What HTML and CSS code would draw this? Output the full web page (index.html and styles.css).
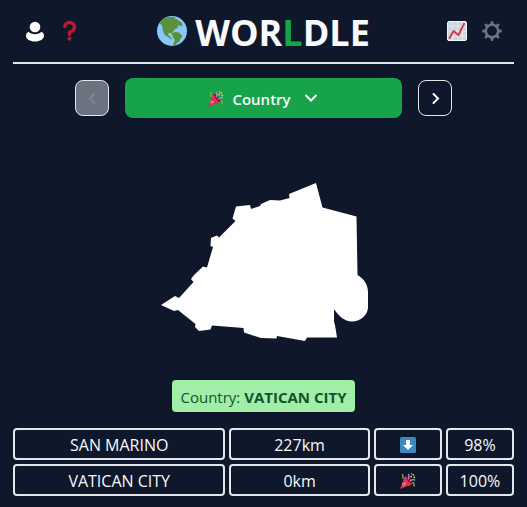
FILE: index.html
```html
<!DOCTYPE html>
<html lang="en">
<head>
<meta charset="utf-8">
<meta name="viewport" content="width=device-width, initial-scale=1">
<title>Worldle</title>
<link rel="stylesheet" href="styles.css">
</head>
<body>
<svg class="sprites" aria-hidden="true">
  <symbol id="popper" viewBox="0 0 36 36">
    <path fill="#dd2e44" d="M11.6 7.3 0.6 34.1c-.3.8.5 1.5 1.3 1.3l27-11C26 18 19 10 11.6 7.3z"/>
    <path fill="#ea596e" d="M11.6 7.3 8 16l12 12 6-2.500C22 19 17 12 11.600 7.300z"/>
    <path fill="#a0041e" d="M14 12c2 7 7 12 12 12l3 .500C27 15 18 7 12 7c-.500 1.500 1 3 2 5z"/>
    <path fill="#dd2e44" d="M11 9c1 8 9 16 16 16l-8 4L7 18z"/>
    <path fill="none" stroke="#aa8dd8" stroke-width="3" d="M18 14c4-4 2-8 1-12M22 19c3-4 7-5 12-3"/>
    <path fill="none" stroke="#77b255" stroke-width="3" d="M4 3c6 1-1 7 4 10M28 22c7-1 0 5 5 8"/>
    <path fill="none" stroke="#aa8dd8" stroke-width="2.500" d="m5 22 5 8"/>
    <g fill="#ffcc4d"><circle cx="25" cy="8" r="2"/><circle cx="30" cy="4" r="2"/><circle cx="32" cy="10" r="2"/><circle cx="11" cy="24" r="2"/><circle cx="26" cy="2" r="1.500"/></g>
  </symbol>
</svg>
<div class="app">
  <header class="header">
    <div class="tools">
      <button class="icon-button" aria-label="Profile">
        <svg width="20" height="22" viewBox="0 0 20 22" fill="#fff"><circle cx="10" cy="7" r="5.300"/><path d="M3.500 11.800C5 13.300 7.300 14.300 10 14.300s5-1 6.500-2.500c1.500.700 2.500 2.200 2.500 3.900C19 19 15 21.500 10 21.500s-9-2.500-9-5.800c0-1.700 1-3.200 2.500-3.900z"/></svg>
      </button>
      <button class="icon-button" aria-label="Help">
        <svg width="20" height="20" viewBox="0 0 36 36"><path fill="#be1931" d="M17 27c-1.700 0-3-1.300-3-3v-4c0-1.700 1.300-3 3-3 3 0 6-2.600 6-6 0-3-2.400-5-6-5-3 0-5 1.500-5.300 4-.2 1.600-1.500 3-3.200 3S5.500 11.500 5.700 10C6.200 4 11 0 17 0c7 0 12 4.600 12 11 0 5.700-4 10.500-9 11.600V24c0 1.700-1.300 3-3 3z"/><circle cx="17" cy="32" r="3.500" fill="#be1931"/></svg>
      </button>
    </div>
    <h1 class="title">
      <svg width="30" height="30" viewBox="0 0 36 36" aria-hidden="true"><circle cx="18" cy="18" r="18" fill="#88c9f9"/><path fill="#5c913b" d="M4.500 6.500C7 3.500 10 1.500 13 .8l3 .6 3-.6 3 1-1 1.700 3 0 2.500 2.500 3 1.500 1 3-1.500 2-2.500-1.500-2 1 1 2.500-3 .6-3 2.900-.5 2 2 2-.5 1.500-2.500-1-.5-2-2.500-.5-2 2 1 1.500 1.500.5 1 2.500 2 .8-1.500.8-3.500-2.800-3.500-1.700-2.500-4-1-5.500L5.500 10.500 3 9z"/><path fill="#5c913b" d="M18.500 21.500l3-2.500 4.500.8 3 2.500 1.500 2.200-2.700 3.500-.8 2.500-3 2-2.200 2.700-2.500.6.500-3 1.500-4-2.300-3.500z"/></svg>
      <span class="wordmark">WOR<span class="accent">L</span>DLE</span>
    </h1>
    <div class="tools">
      <button class="icon-button" aria-label="Statistics">
        <svg width="20" height="20" viewBox="0 0 20 20"><rect x=".5" y=".5" width="19" height="19" rx="1.500" fill="#ccd6dd" stroke="#f5f8fa"/><path fill="none" stroke="#e1e8ed" stroke-width=".8" d="M1 5.500h18M1 10.500h18M1 15.500h18M5.500 1v18M10.500 1v18M15.500 1v18"/><path fill="none" stroke="#dd2e44" stroke-width="1.800" stroke-linejoin="round" stroke-linecap="round" d="m2.500 17 4-7 5 4L17 2.800"/></svg>
      </button>
      <button class="icon-button" aria-label="Settings">
        <svg width="20" height="20" viewBox="0 0 20 20" fill="none" stroke="#66757f"><circle cx="10" cy="10" r="6.200" stroke-width="2.600"/><path stroke-width="3" stroke-linecap="round" d="M10 1.500V3M10 17v1.500M1.500 10H3M17 10h1.500M4 4l1 1M15 15l1 1M16 4l-1 1M5 15l-1 1"/></svg>
      </button>
    </div>
  </header>

  <main>
    <nav class="rounds" aria-label="Rounds">
      <button class="step" aria-label="Previous round" disabled>
        <svg width="16" height="16" viewBox="0 0 16 16"><path d="M10 4 6 8.500l4 4.500"/></svg>
      </button>
      <button class="round" aria-haspopup="menu">
        <svg class="emoji" width="16" height="16" aria-hidden="true"><use href="#popper"/></svg>
        <span>Country</span>
        <svg class="chevron" width="16" height="16" viewBox="0 0 16 16" aria-hidden="true"><path d="m3 4.500 5 5 5-5"/></svg>
      </button>
      <button class="step" aria-label="Next round">
        <svg width="16" height="16" viewBox="0 0 16 16"><path d="m6.500 4 4.500 4.500L6.500 13"/></svg>
      </button>
    </nav>

    <figure class="shape">
      <svg width="210" height="160" viewBox="159 182 210 160" role="img" aria-label="Country outline"><path fill="#fff" d="M161 305 175 296 179 298 193.500 282 191 279 194 275 203 266.500 207 267.500 213 247 210.500 246 211 238 217 235.500 219 237.500 235.500 221 232.500 218.500 236 206.500 250 205 251 209 260 206 261 204 270 200 280 200.500 289.500 198 289 194 316 183 322.500 207.500 356.500 216.500 357.500 275C364 278.500 368 285 368 292v16c-1 8-8 13.500-16 13.500-8-.5-13-5-18-12.500v13l1 3 2 12.500h-30l-2 3.500-28-5-.5 2.500-15.500-.5-17-5.500-.5-4.500-31.500-2.500-1.500 4-11.500 1.500-4-4 .5-3-17.500-14-4 1z"/></svg>
    </figure>

    <p class="answer">Country: <strong>VATICAN CITY</strong></p>

    <table class="guesses" aria-label="Guesses">
      <tbody>
        <tr><td>SAN MARINO</td><td>227km</td><td>
          <svg width="16" height="16" viewBox="0 0 16 16" role="img" aria-label="South"><rect width="16" height="16" rx="1.500" fill="#3b88c3"/><path fill="#fff" d="M6 3h4v5h3l-5 5-5-5h3z"/></svg>
        </td><td>98%</td></tr>
        <tr><td>VATICAN CITY</td><td>0km</td><td>
          <svg width="16" height="16" role="img" aria-label="Correct"><use href="#popper"/></svg>
        </td><td>100%</td></tr>
      </tbody>
    </table>
  </main>
</div>
</body>
</html>
```
FILE: styles.css
```css
* {
  box-sizing: border-box;
}

body {
  margin: 0;
  background: #0f172a;
  color: #f8fafc;
  font: 16px/24px "Open Sans", "Noto Sans", sans-serif;
}

button {
  display: flex;
  align-items: center;
  justify-content: center;
  padding: 0;
  border: 0;
  background: none;
  color: inherit;
  font: inherit;
}

.sprites {
  display: none;
}

.app {
  max-width: 640px;
  margin: 0 auto;
  padding: 0 13px;
}

.header {
  display: flex;
  align-items: center;
  justify-content: space-between;
  height: 64px;
  padding: 0 12px;
  border-bottom: 2px solid #e5e7eb;
}

.tools {
  display: flex;
  gap: 15px;
}

.icon-button {
  width: 20px;
  height: 24px;
}

.title {
  display: flex;
  align-items: center;
  gap: 8px;
  margin: 0;
  font-size: 36px;
  line-height: 40px;
  font-weight: 700;
}

.wordmark {
  padding-top: 4px;
}

.accent {
  color: #16a34a;
}

.rounds {
  display: flex;
  align-items: center;
  justify-content: center;
  gap: 16px;
  padding-top: 14px;
}

.step {
  width: 34px;
  height: 36px;
  border: 1px solid #e5e7eb;
  border-radius: 8px;
}

.step path,
.chevron path {
  fill: none;
  stroke: #fff;
  stroke-width: 2;
  stroke-linecap: round;
}

.step:disabled {
  background: #6b7280;
}

.step:disabled path {
  stroke: #84848a;
}

.round {
  flex: 0 1 277px;
  gap: 8px;
  height: 40px;
  padding-top: 2px;
  border-radius: 8px;
  background: #16a34a;
  font-size: 15px;
  font-weight: 600;
}

.chevron {
  margin-left: 4px;
}

.shape {
  display: flex;
  justify-content: center;
  margin: 0;
  padding: 64px 0 38px;
}

.answer {
  width: fit-content;
  margin: 0 auto 16px;
  padding: 5px 8px 3px;
  border-radius: 4px;
  background: #a0eea8;
  color: #14532d;
  font-size: 15px;
}

.answer strong {
  font-weight: 700;
}

.guesses,
.guesses tbody {
  display: grid;
  gap: 4px;
}

.guesses tr {
  display: grid;
  grid-template-columns: repeat(7, minmax(0, 1fr));
  gap: 4px;
}

.guesses td {
  display: flex;
  align-items: center;
  justify-content: center;
  height: 32px;
  padding: 2px 0 0;
  border: 2px solid #e5e7eb;
  border-radius: 4px;
}

.guesses td:nth-child(1) {
  grid-column: span 3;
}

.guesses td:nth-child(2) {
  grid-column: span 2;
}
```
